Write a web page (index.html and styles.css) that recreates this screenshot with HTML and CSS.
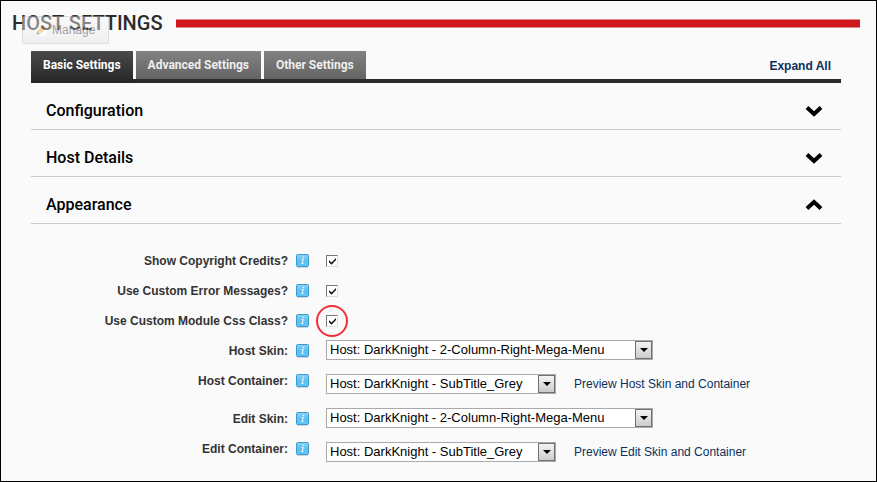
FILE: index.html
```html
<!DOCTYPE html>
<html lang="en">
<head>
<meta charset="utf-8">
<title>Host Settings</title>
<link rel="stylesheet" href="styles.css">
</head>
<body>
<svg class="defs" aria-hidden="true">
  <defs>
    <linearGradient id="blue" x1="0" y1="0" x2="0" y2="1">
      <stop offset="0" stop-color="#8fd3f3"/><stop offset=".5" stop-color="#5fc0ee"/><stop offset="1" stop-color="#5cc6f6"/>
    </linearGradient>
    <symbol id="info" viewBox="0 0 13 15">
      <rect x="1" y="13" width="11" height="1" fill="#d4d4d4"/>
      <rect x=".5" y=".5" width="12" height="12" rx="1" fill="url(#blue)" stroke="#3a9ad3"/>
      <path d="M6.900 2.800h1.300l-.3 1.300H6.600zM5.700 5h2L6.900 9h.8l-.2.800H5.200l.2-.8h.5l.7-3.200h-1z" fill="#fff"/>
    </symbol>
    <symbol id="down" viewBox="0 0 18 12">
      <path d="M2 2.500l7 6.500 7-6.500" fill="none" stroke="#000" stroke-width="4"/>
    </symbol>
    <symbol id="up" viewBox="0 0 18 12">
      <path d="M2 9.500l7-6.500 7 6.500" fill="none" stroke="#000" stroke-width="4"/>
    </symbol>
  </defs>
</svg>
<main class="page">
  <header class="title-bar">
    <h1>HOST SETTINGS</h1>
    <span class="rule"></span>
    <button class="manage" type="button">
      <svg width="12" height="12" viewBox="0 0 12 12" aria-hidden="true"><rect width="12" height="12" rx="2" fill="#fff"/><path d="M1 11l1-4 3 3z" fill="#777"/><path d="M2 7l6-6 3 3-6 6z" fill="#e8a745"/><path d="M7 2l1-1 3 3-1 1z" fill="#999"/></svg>
      Manage
    </button>
  </header>

  <div class="panel">
    <nav class="tabs">
      <a class="tab active" href="#basic">Basic Settings</a>
      <a class="tab" href="#advanced">Advanced Settings</a>
      <a class="tab" href="#other">Other Settings</a>
      <a class="expand" href="#all">Expand All</a>
    </nav>

    <h2 class="section"><button type="button">Configuration <svg class="chevron"><use href="#down"/></svg></button></h2>
    <h2 class="section"><button type="button">Host Details <svg class="chevron"><use href="#down"/></svg></button></h2>
    <h2 class="section"><button type="button">Appearance <svg class="chevron"><use href="#up"/></svg></button></h2>

    <form class="fields">
      <div class="row">
        <label for="credits">Show Copyright Credits?</label><svg class="info"><use href="#info"/></svg>
        <div class="control"><span class="check"><input type="checkbox" id="credits" checked></span></div>
      </div>
      <div class="row">
        <label for="errors">Use Custom Error Messages?</label><svg class="info"><use href="#info"/></svg>
        <div class="control"><span class="check"><input type="checkbox" id="errors" checked></span></div>
      </div>
      <div class="row">
        <label for="css">Use Custom Module Css Class?</label><svg class="info"><use href="#info"/></svg>
        <div class="control"><span class="check circled"><input type="checkbox" id="css" checked></span></div>
      </div>
      <div class="row">
        <label for="hskin">Host Skin:</label><svg class="info"><use href="#info"/></svg>
        <div class="control pick"><span class="select wide"><select id="hskin"><option>Host: DarkKnight - 2-Column-Right-Mega-Menu</option></select></span></div>
      </div>
      <div class="row tall">
        <label for="hcont">Host Container:</label><svg class="info"><use href="#info"/></svg>
        <div class="control pick"><span class="select"><select id="hcont"><option>Host: DarkKnight - SubTitle_Grey</option></select></span><a class="preview" href="#host">Preview Host Skin and Container</a></div>
      </div>
      <div class="row">
        <label for="eskin">Edit Skin:</label><svg class="info"><use href="#info"/></svg>
        <div class="control pick"><span class="select wide"><select id="eskin"><option>Host: DarkKnight - 2-Column-Right-Mega-Menu</option></select></span></div>
      </div>
      <div class="row tall">
        <label for="econt">Edit Container:</label><svg class="info"><use href="#info"/></svg>
        <div class="control pick"><span class="select"><select id="econt"><option>Host: DarkKnight - SubTitle_Grey</option></select></span><a class="preview" href="#edit">Preview Edit Skin and Container</a></div>
      </div>
    </form>
  </div>
</main>
</body>
</html>
```
FILE: styles.css
```css
*, *::before { box-sizing: border-box; }

body {
  margin: 0;
  background: #fafafa;
  color: #333;
  font: 12px/16px "Liberation Sans", Arial, sans-serif;
}

a { color: #0b3060; text-decoration: none; }

.defs { position: absolute; width: 0; height: 0; }

.page {
  min-height: 100vh;
  border: 1px solid #000;
  padding: 10px 16px 8px 11px;
}

.title-bar {
  position: relative;
  display: flex;
  align-items: center;
  gap: 13px;
  height: 24px;
}

h1 {
  margin: 0;
  color: #2b2b2b;
  font: 500 20px/24px Roboto, sans-serif;
}

.rule {
  flex: 1;
  height: 9px;
  background: #d0171c;
  border: solid #e58a8c;
  border-width: 1px 0;
}

.manage {
  position: absolute;
  left: 10px;
  top: 5px;
  display: flex;
  align-items: center;
  gap: 5px;
  width: 87px;
  height: 28px;
  padding: 0 12px;
  border: 1px solid #bbb;
  border-radius: 2px;
  background: linear-gradient(#f8f8f8, #e4e4e4);
  color: #333;
  font: 12px/16px "Liberation Sans", Arial, sans-serif;
  opacity: .45;
}

.panel { margin: 16px 19px 0; }

.tabs {
  display: flex;
  align-items: flex-start;
  gap: 3px;
  height: 32px;
  border-bottom: 4px solid #2b2b2b;
  font-weight: bold;
}

.tab {
  height: 28px;
  padding: 6px 12px;
  background: linear-gradient(#828282, #646464);
  color: #eee;
  font-family: Roboto, sans-serif;
}

.tab.active {
  height: 32px;
  background: linear-gradient(#4a4a4a, #262626);
  color: #fff;
}

.expand {
  margin-left: auto;
  padding: 7px 10px;
}

.section {
  margin: 0;
  border-bottom: 1px solid #ccc;
}

.section button {
  display: flex;
  align-items: center;
  justify-content: space-between;
  width: 100%;
  height: 46px;
  padding: 9px 18px 0 15px;
  border: 0;
  background: none;
  color: #000;
  font: 500 16px/24px Roboto, sans-serif;
}

.chevron { width: 18px; height: 12px; }

.fields { padding-top: 22px; }

.row {
  display: grid;
  grid-template-columns: 257px 13px 1fr;
  column-gap: 8px;
  height: 30px;
}

.row.tall { height: 38px; }

.row label {
  padding-top: 7px;
  text-align: right;
  font-weight: bold;
}

.info { width: 13px; height: 15px; margin-top: 8px; }

.control {
  display: flex;
  align-items: center;
  padding-left: 9px;
}

.control.pick { padding-bottom: 2px; }

.check { position: relative; display: flex; }

.check input {
  appearance: none;
  width: 12px;
  height: 12px;
  margin: 0;
  border: solid;
  border-width: 1px;
  border-color: #777 #ddd #ddd #777;
  background: #fff;
}

.check input:checked::after {
  content: "";
  display: block;
  width: 7px;
  height: 7px;
  margin: 2px;
  background: #111;
  clip-path: polygon(0 33%, 36% 66%, 100% 0, 100% 30%, 36% 96%, 0 62%);
}

.circled::after {
  content: "";
  position: absolute;
  inset: -10px;
  border: 2px solid #f03038;
  border-radius: 50%;
  pointer-events: none;
}

.select {
  position: relative;
  width: 230px;
  height: 20px;
}

.select.wide { width: 327px; }

.select select {
  appearance: none;
  display: block;
  width: 100%;
  height: 20px;
  padding: 0 20px 0 3px;
  border: 1px solid #aaa;
  border-radius: 0;
  background: #fff;
  color: #000;
  font: 13px/18px "Liberation Sans", Arial, sans-serif;
}

.select::before {
  content: "";
  position: absolute;
  right: 1px;
  top: 1px;
  width: 17px;
  height: 18px;
  border: 1px solid #707070;
  background: linear-gradient(#f4f4f4, #ccc);
  pointer-events: none;
}

.select::after {
  content: "";
  position: absolute;
  right: 5px;
  top: 8px;
  border: solid transparent;
  border-width: 4px 4px 0;
  border-top-color: #000;
  pointer-events: none;
}

.preview { margin-left: 18px; }
```
